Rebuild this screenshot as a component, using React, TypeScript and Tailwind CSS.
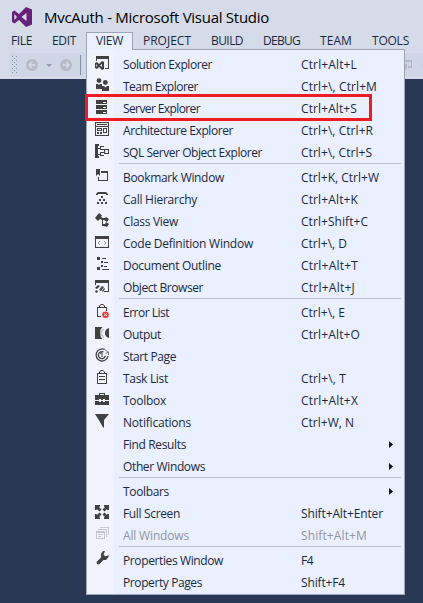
import React, { useLayoutEffect, useRef, useState } from "react";

// Text whose tracking is adjusted so that it fills the given advance width.
function Label({ text, width, className = "" }: { text: string; width: number; className?: string }) {
  const ref = useRef<HTMLSpanElement>(null);
  const [spacing, setSpacing] = useState(0);
  useLayoutEffect(() => {
    const el = ref.current;
    if (!el) return;
    el.style.letterSpacing = "0px";
    setSpacing((width - el.getBoundingClientRect().width) / text.length);
  }, [text, width]);
  return (
    <span ref={ref} className={`inline-block whitespace-pre ${className}`} style={{ letterSpacing: `${spacing}px` }}>
      {text}
    </span>
  );
}

const icons: Record<string, React.ReactNode> = {
  solution: (
    <>
      <path d="M2 1h13v13h-4v-1h3V4H3v2H2z" />
      <path fillRule="evenodd" d="M8 6l2 1v7l-2 1-3-3-2 2-2-1V8l2-1 2 2zM8 9l-2 1.5L8 12zM2.2 9.2v2.6l1.2-1.3z" />
    </>
  ),
  team: (
    <>
      <circle cx="5" cy="3.6" r="2.4" />
      <circle cx="11.3" cy="5.5" r="2.4" />
      <path d="M2 7h2l1 1 1-1h2v5H2zM8 9h2l1.5 1.5L13 9h2v5H8z" />
    </>
  ),
  server: (
    <>
      <path d="M2 1h11v4H2zM2 6h11v4H2zM2 11h11v4H2z" />
      <path fill="#f1f4ff" d="M9 3h3v1H9zM9 8h3v1H9zM9 13h3v1H9z" />
    </>
  ),
  architecture: (
    <>
      <path fillRule="evenodd" d="M1 1h14v5H1zM2 2v3h12V2z" />
      <path d="M3 3h10v1H3zM1 6h1v9H1zM14 6h1v9h-1zM1 14h14v1H1z" />
      <path fillRule="evenodd" d="M3 7h5v3H3zM4 8v1h3V8zM9 7h4v5H9zM10 8v3h2V8z" />
      <path d="M3 11h2v2H3zM6 11h2v2H6z" />
    </>
  ),
  sql: (
    <>
      <path d="M1 1h4v2H4v10h1v2H1zM4 5h2v1H4zM4 11h2v1H4z" />
      <path
        fillRule="evenodd"
        d="M6 3h4v1H7v2h3v1H6zM10 6h5v5h-5zM11 7v3h3V7zM6 9h4v1H7v2h3v1H6z"
      />
    </>
  ),
  bookmark: <path d="M2 1h4v7L4 6 2 8zM7 3h7v10H4V9h1v3h8V5H7z" />,
  call: (
    <path d="M4 2h8l2 2v1h-2V4H4v1H2V4zM7 6h2v2H7zM5 9h2v2H5zM9 9h2v2H9zM3 12h2v2H3zM7 12h2v2H7zM11 12h2v2h-2z" />
  ),
  classview: (
    <path d="M5 1l3 2.5L7 5l2 1h2l1-1 3 2-2 3-3-2H9v4h2l1-2 3 2-2 3-3-1H8V8L6 7 4 9 1 6z" />
  ),
  code: (
    <>
      <path fillRule="evenodd" d="M1 2h14v12H1zM2 5v8h12V5z" />
      <path fill="none" stroke="#a3a4b5" d="M6 7L4 9l2 2M10 7l2 2-2 2" />
    </>
  ),
  outline: (
    <path d="M3 1h3v3H3zM8 2h4v1H8zM7 5h2v2H7zM10 6h4v1h-4zM7 9h2v2H7zM10 10h3v1h-3zM3 11h3v3H3zM8 13h7v1H8z" />
  ),
  objects: (
    <>
      <path d="M1 2h14v12h-5v-1h4V5H2v2H1z" />
      <path d="M4 7l2 1-3 3-2-1zM8 8l2 1-3 4-2-1zM2 12l2 1-1 2-2-1zM10 10l1 1-2 3-1-1z" />
    </>
  ),
  error: (
    <>
      <path d="M7 1h2l2 2v1h2v4h-1V5H4v8h3v1H3V4h2V3zM7 2L6 3v1h4V3L9 2z" fillRule="evenodd" />
      <circle cx="11.5" cy="11.7" r="3.3" fill="#e33b35" />
      <path d="M10.2 10.4l2.6 2.6m0-2.6l-2.6 2.6" stroke="#fff" />
    </>
  ),
  output: (
    <>
      <path d="M1 2h7C5.500 4 4.500 6 4.500 8S5.500 12 8 14H1z" />
      <path d="M10 3.500v1.500Q8 6 8 8t2 3v1.500Q5.800 11 5.800 8T10 3.500z" fill="#c4c6d1" />
      <path d="M1 2h7.500Q6 4 6 8t2.500 6H1z" />
      <path d="M15 3v10q-4-1-4-5t4-5z" />
    </>
  ),
  start: (
    <>
      <path
        d="M10.500 2.500A6 6 0 1 0 14 9M9.500 5A3.500 3.500 0 1 0 11.300 9"
        fill="none"
        stroke="currentColor"
        strokeWidth="1.3"
      />
      <path d="M6 6.500L8 5.500V10" fill="none" stroke="currentColor" />
      <path d="M10 2l4 3M11.500 6.500l3-1.500v3" fill="none" stroke="#7b7d84" />
    </>
  ),
  task: (
    <path
      fillRule="evenodd"
      d="M7 1h2l2 2v1h2v11H3V4h2V3zM7 2L6 3v1h4V3L9 2zM4 5v9h8V5zM5 7h6v1H5zM5 10h6v1H5z"
    />
  ),
  toolbox: (
    <path fillRule="evenodd" d="M5 2h6v2h4v5h-4V8H9v1H7V8H5v1H1V4h4zM6 3v1h4V3zM1 10h4v1h2v-1h2v1h2v-1h4v4H1z" />
  ),
  notify: <path d="M1 1h14l-5 6v8L8.500 13.500 6 9z" />,
  full: (
    <path d="M1 1h5v1.500L5 3l2.500 2.500-2 2L3 5l-.5 1H1zM15 1h-5v1.500l1 .5-2.500 2.500 2 2L13 5l.5 1H15zM1 15h5v-1.500L5 13l2.500-2.500-2-2L3 11l-.5-1H1zM15 15h-5v-1.500l1-.5-2.500-2.500 2-2L13 11l.5-1H15z" />
  ),
  windows: (
    <path
      fillRule="evenodd"
      d="M6 1h9v8h-1V2H6zM4 3h9v8h-1V4H4zM2 5h9v8H2zM3 7v5h7V7zM4 8h5v1H4zM4 10h3v1H4z"
    />
  ),
  wrench: <path d="M11 1L9.500 4.500l2 2L14.500 5v2L12 10H9.500L5 14.500 3 14l-.5-2L7 7.500V4l2-3z" transform="translate(0 -1)" />,
};

function Icon({ name, muted }: { name: string; muted?: boolean }) {
  return (
    <svg width="16" height="16" viewBox="0 0 16 16" fill="currentColor" className={muted ? "text-[#c5c7d2]" : "text-[#414142]"}>
      {icons[name]}
    </svg>
  );
}

type Item = { icon?: string; text: string; w: number; keys?: string; kw?: number; sub?: boolean; muted?: boolean };

const groups: Item[][] = [
  [
    { icon: "solution", text: "Solution Explorer", w: 89, keys: "Ctrl+Alt+L", kw: 56 },
    { icon: "team", text: "Team Explorer", w: 75, keys: "Ctrl+\\, Ctrl+M", kw: 76 },
    { icon: "server", text: "Server Explorer", w: 77, keys: "Ctrl+Alt+S", kw: 56 },
    { icon: "architecture", text: "Architecture Explorer", w: 110, keys: "Ctrl+\\, Ctrl+R", kw: 72 },
    { icon: "sql", text: "SQL Server Object Explorer", w: 139, keys: "Ctrl+\\, Ctrl+S", kw: 71 },
  ],
  [
    { icon: "bookmark", text: "Bookmark Window", w: 101, keys: "Ctrl+K, Ctrl+W", kw: 78 },
    { icon: "call", text: "Call Hierarchy", w: 74, keys: "Ctrl+Alt+K", kw: 57 },
    { icon: "classview", text: "Class View", w: 55, keys: "Ctrl+Shift+C", kw: 67 },
    { icon: "code", text: "Code Definition Window", w: 130, keys: "Ctrl+\\, D", kw: 46 },
    { icon: "outline", text: "Document Outline", w: 98, keys: "Ctrl+Alt+T", kw: 57 },
    { icon: "objects", text: "Object Browser", w: 80, keys: "Ctrl+Alt+J", kw: 54 },
  ],
  [
    { icon: "error", text: "Error List", w: 46, keys: "Ctrl+\\, E", kw: 44 },
    { icon: "output", text: "Output", w: 38, keys: "Ctrl+Alt+O", kw: 59 },
    { icon: "start", text: "Start Page", w: 53 },
    { icon: "task", text: "Task List", w: 45, keys: "Ctrl+\\, T", kw: 45 },
    { icon: "toolbox", text: "Toolbox", w: 43, keys: "Ctrl+Alt+X", kw: 57 },
    { icon: "notify", text: "Notifications", w: 68, keys: "Ctrl+W, N", kw: 53 },
    { text: "Find Results", w: 63, sub: true },
    { text: "Other Windows", w: 82, sub: true },
  ],
  [
    { text: "Toolbars", w: 46, sub: true },
    { icon: "full", text: "Full Screen", w: 57, keys: "Shift+Alt+Enter", kw: 82 },
    { icon: "windows", text: "All Windows", w: 66, keys: "Shift+Alt+M", kw: 66, muted: true },
  ],
  [
    { icon: "wrench", text: "Properties Window", w: 100, keys: "F4", kw: 12 },
    { text: "Property Pages", w: 79, keys: "Shift+F4", kw: 44 },
  ],
];

function Row({ item }: { item: Item }) {
  return (
    <div className={`flex h-[22px] items-center ${item.muted ? "text-[#93959f]" : "text-[#1b293e]"}`}>
      <div className="flex h-full w-[36px] shrink-0 pt-0.5 pl-[7px]">
        {item.icon && <Icon name={item.icon} muted={item.muted} />}
      </div>
      <div className="w-[178px] shrink-0 pt-px">
        <Label text={item.text} width={item.w} />
      </div>
      {item.keys && <Label text={item.keys} width={item.kw ?? 0} className="pt-px" />}
      {item.sub && (
        <svg className="ml-[88px]" width="4" height="7" viewBox="0 0 4 7">
          <path d="M0 0l4 3.5L0 7z" fill="#0b0f18" />
        </svg>
      )}
    </div>
  );
}

function ViewMenu() {
  return (
    <div className="absolute top-[49px] left-[86px] z-10 h-[546px] w-[319px] border border-[#9ba7b7] bg-[linear-gradient(to_right,#f1f4ff_27px,#eaf0ff_27px)] pt-[3px] text-[12px] leading-[16px]">
      {groups.map((g, i) => (
        <React.Fragment key={i}>
          {i > 0 && (
            <div className="h-[3px] pr-[3px] pl-[32px]">
              <div className="h-px bg-[#bec3cf]" />
            </div>
          )}
          {g.map((item) => (
            <Row key={item.text} item={item} />
          ))}
        </React.Fragment>
      ))}
      <div className="absolute -top-px left-0 h-px w-[45px] bg-[#eaf0ff]" />
      <div className="absolute top-[44px] -left-[2px] h-[27px] w-[287px] border-3 border-[#ed1c24]" />
    </div>
  );
}

function NavButton({ back }: { back?: boolean }) {
  return (
    <svg width="12" height="12" viewBox="0 0 12 12">
      <circle cx="6" cy="6" r="6" fill="#b5bac5" />
      <path
        d={back ? "M9.5 6H3.5M6 3L3 6l3 3" : "M2.5 6h6M6 3l3 3-3 3"}
        fill="none"
        stroke="#d6dbe9"
        strokeWidth="1.5"
      />
    </svg>
  );
}

export default function App() {
  return (
    <div className="relative flex h-[603px] w-[423px] flex-col overflow-hidden bg-[#293955] font-['Open_Sans','Noto_Sans',sans-serif] text-[#1b293e]">
      <header className="h-[79px] shrink-0 bg-[#d6dbe9]">
        <div className="flex h-[32px] items-center pl-3">
          <svg className="mt-0.5" width="20" height="20" viewBox="0 0 20 20">
            <path
              fillRule="evenodd"
              fill="#68217a"
              d="M14 0l6 2.5v15L14 20l-7-7-4.5 3.5L0 15V5l2.5-1.5L7 7zM14.5 6l-5 4 5 4zM2.3 7v6L5 10z"
            />
          </svg>
          <Label
            text="MvcAuth - Microsoft Visual Studio"
            width={225}
            className="ml-[12px] pt-px text-[15px] leading-[20px] text-black"
          />
        </div>
        <nav className="flex h-[17px] text-[12px] leading-[17px]">
          <div className="w-[41px] pl-[11px]"><Label text="FILE" width={21} /></div>
          <div className="w-[45px] pl-[11px]"><Label text="EDIT" width={24} /></div>
          <div className="h-[17px] w-[47px] border border-b-0 border-[#9ba7b7] bg-[#eaf0ff] pl-[9px] leading-[15px]">
            <Label text="VIEW" width={27} />
          </div>
          <div className="w-[67px] pl-[10px]"><Label text="PROJECT" width={48} /></div>
          <div className="w-[53px] pl-[11px]"><Label text="BUILD" width={32} /></div>
          <div className="w-[57px] pl-[10px]"><Label text="DEBUG" width={37} /></div>
          <div className="w-[52px] pl-[10px]"><Label text="TEAM" width={32} /></div>
          <div className="pl-[10px]"><Label text="TOOLS" width={37} /></div>
        </nav>
        <div className="mt-1 ml-[10px] flex h-6 items-center bg-[#cfd6e5]">
          <svg className="ml-0.5 shrink-0 text-[#8995aa]" width="6" height="18" viewBox="0 0 6 18" fill="currentColor">
            {[0, 4, 8, 12, 16].map((y) => (
              <path key={y} d={`M0 ${y}h1v1H0zM4 ${y}h1v1H4zM2 ${y + 2}h1v1H2z`} />
            ))}
          </svg>
          <div className="ml-2 flex shrink-0 items-center">
            <NavButton back />
            <svg className="mx-2" width="6" height="3" viewBox="0 0 6 3">
              <path d="M0 0h6L3 3z" fill="#9299a5" />
            </svg>
            <NavButton />
          </div>
          <div className="ml-2 h-5 w-px shrink-0 bg-[#8591a2]" />
          <svg className="ml-[321px] shrink-0 text-[#b3b8c4]" width="20" height="12" viewBox="0 0 20 12">
            <path d="M0 1h10v8H6V7h3V3H0zM0 5h5v4L3 11H2V8H0z" fill="currentColor" />
            <path d="M19 6h1v1h-1z" fill="currentColor" />
          </svg>
        </div>
      </header>
      <ViewMenu />
    </div>
  );
}
